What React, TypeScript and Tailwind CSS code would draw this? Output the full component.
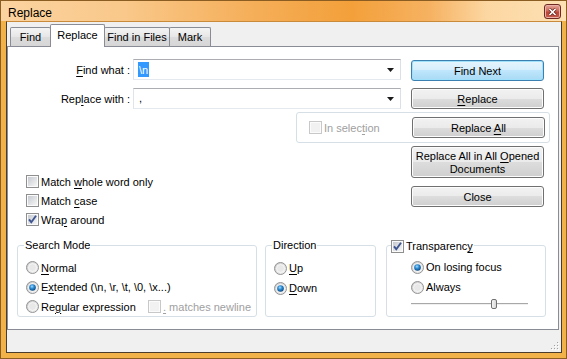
import React from 'react';

const U = ({ children }: { children: React.ReactNode }) => (
  <span className="underline underline-offset-[2px] decoration-[1px]">{children}</span>
);

function Check({ checked = false, disabled = false }: { checked?: boolean; disabled?: boolean }) {
  return (
    <svg width="13" height="13" viewBox="0 0 13 13" className="shrink-0">
      <defs>
        <linearGradient id="cbIn" x1="0" y1="0" x2="1" y2="1">
          <stop offset="0" stopColor="#c6cad0" />
          <stop offset="1" stopColor="#f6f6f6" />
        </linearGradient>
      </defs>
      <rect x="0.5" y="0.5" width="12" height="12" fill="#fbfbfb" stroke={disabled ? '#c8c8c8' : '#8f8f8f'} />
      <rect x="2" y="2" width="9" height="9" fill={disabled ? '#f1f1f1' : 'url(#cbIn)'} />
      {checked && <path d="M3 6.3 L5.3 9.2 L10 2.8" fill="none" stroke="#3e5590" strokeWidth="1.9" />}
    </svg>
  );
}

function Radio({ checked = false }: { checked?: boolean }) {
  return (
    <svg width="13" height="13" viewBox="0 0 13 13" className="shrink-0">
      <defs>
        <linearGradient id="rbOut" x1="0" y1="0" x2="1" y2="1">
          <stop offset="0" stopColor="#c8c8c8" />
          <stop offset="1" stopColor="#f4f4f4" />
        </linearGradient>
        <radialGradient id="rbDot" cx="0.42" cy="0.35" r="0.65">
          <stop offset="0" stopColor="#a6dcfb" />
          <stop offset="0.45" stopColor="#2f8fd6" />
          <stop offset="1" stopColor="#0c4a85" />
        </radialGradient>
      </defs>
      <circle cx="6.5" cy="6.5" r="6" fill="url(#rbOut)" stroke="#949494" />
      <circle cx="6.5" cy="6.5" r="4" fill="#e8e8e8" stroke="#fafafa" strokeWidth="0.8" />
      {checked && <circle cx="6.5" cy="6.5" r="3.3" fill="url(#rbDot)" />}
    </svg>
  );
}

function Btn({ children, primary = false, className = '' }: { children: React.ReactNode; primary?: boolean; className?: string }) {
  const skin = primary
    ? 'border-[#3c7fb1] bg-[linear-gradient(#e5f5fd,#d5eefc_50%,#bfe6fc_50%,#a9daf5)] shadow-[inset_0_0_0_1px_#9fe0fb]'
    : 'border-[#707070] bg-[linear-gradient(#f2f2f2,#ebebeb_50%,#dddddd_50%,#cfcfcf)] shadow-[inset_0_0_0_1px_#fcfcfc]';
  return (
    <div className={`w-[133px] flex items-center justify-center text-center leading-[13px] rounded-[3px] border ${skin} ${className}`}>
      <span className="pt-[2px]">{children}</span>
    </div>
  );
}

function Combo({ children }: { children: React.ReactNode }) {
  return (
    <div className="ml-[3px] w-[268px] h-[21px] flex items-center bg-white border border-[#abadb3] border-b-[#e3e9ef] border-l-[#e2e3ea] border-r-[#dbdfe6] pl-[4px] pr-[6px]">
      {children}
      <svg width="7" height="4" viewBox="0 0 7 4" className="ml-auto">
        <polygon points="0,0 7,0 3.5,4" fill="#1a1a1a" />
      </svg>
    </div>
  );
}

function Group({ title, className = '', children }: { title: React.ReactNode; className?: string; children: React.ReactNode }) {
  return (
    <div className={`relative border border-[#d5dfe5] rounded-[3px] ${className}`}>
      <div className="absolute -top-[7px] left-[6px] bg-white px-[1px] leading-[13px] flex items-center">{title}</div>
      {children}
    </div>
  );
}

function CloseBtn() {
  return (
    <div className="w-[17px] h-[15px] mt-[3px] rounded-[3px] border border-[#6e2a22] bg-[linear-gradient(#e4a49a,#cf6a5c_45%,#bb4638_55%,#c8594a)] flex items-center justify-center shadow-[inset_0_0_0_1px_#eab1a8]">
      <svg width="9" height="8" viewBox="0 0 9 8">
        <path d="M1.5 1 L7.5 7 M7.5 1 L1.5 7" stroke="#5a2018" strokeWidth="3" />
        <path d="M1.5 1 L7.5 7 M7.5 1 L1.5 7" stroke="#ffffff" strokeWidth="1.7" />
      </svg>
    </div>
  );
}

export default function App() {
  return (
    <div className="w-[567px] h-[359px] flex flex-col bg-[#f1b24a] border border-[#8c5d22] font-['Liberation_Sans',Arial,sans-serif] text-[11px] text-black leading-none select-none overflow-hidden">
      {/* Title bar */}
      <div className="h-[20px] shrink-0 flex items-start justify-between pl-[7px] pr-[5px] bg-[linear-gradient(90deg,#fbd3a0_0%,#f9c88a_22%,#f5ae58_45%,#f3a03a_62%,#f6b262_76%,#fcd7a2_86%,#fde0b4_100%)]">
        <span className="text-[12px] mt-[6px]">Replace</span>
        <CloseBtn />
      </div>

      {/* Frame + client */}
      <div className="flex-1 flex pl-[5px] pr-[4px] pb-[5px]">
        <div className="flex-1 flex flex-col bg-[#f0f0f0] border border-[#4a3c2c] border-t-[#c98a3a]">
          {/* Tabs */}
          <div className="h-[24px] shrink-0 flex items-end pl-[3px]">
            <div className="w-[41px] h-[19px] flex items-center justify-center pt-[1px] border border-b-0 border-[#898c95] rounded-t-[2px] bg-[linear-gradient(#f4f4f4,#e6e6e6_50%,#dcdcdc_50%,#d6d6d6)]">Find</div>
            <div className="-ml-[1px] -mb-[1px] relative z-10 w-[55px] h-[23px] flex items-center justify-center pb-[1px] border border-b-0 border-[#898c95] rounded-t-[2px] bg-white">Replace</div>
            <div className="-ml-[1px] w-[66px] h-[19px] flex items-center justify-center pt-[1px] border border-b-0 border-[#898c95] rounded-t-[2px] bg-[linear-gradient(#f4f4f4,#e6e6e6_50%,#dcdcdc_50%,#d6d6d6)]">Find in Files</div>
            <div className="-ml-[1px] w-[42px] h-[19px] flex items-center justify-center pt-[1px] border border-b-0 border-[#898c95] rounded-t-[2px] bg-[linear-gradient(#f4f4f4,#e6e6e6_50%,#dcdcdc_50%,#d6d6d6)]">Mark</div>
          </div>

          {/* Tab panel */}
          <div className="w-[552px] h-[284px] shrink-0 bg-white border border-[#898c95] flex flex-col">
            <div className="flex items-start mt-[12px]">
              <div className="w-[122px] h-[21px] pt-[2px] flex items-center justify-end"><U>F</U>ind what :</div>
              <Combo>
                <span className="bg-[#3399ff] text-white h-[15px] px-[1px] pt-[1px] flex items-center">{'\\n'}</span>
              </Combo>
              <Btn primary className="ml-[10px] mt-[1px] h-[21px]">Find Next</Btn>
            </div>

            <div className="flex items-start mt-[7px]">
              <div className="w-[122px] h-[21px] pt-[2px] flex items-center justify-end">Rep<U>l</U>ace with :</div>
              <Combo>
                <span className="pl-[1px]">,</span>
              </Combo>
              <Btn className="ml-[10px] h-[21px]"><U>R</U>eplace</Btn>
            </div>

            <div className="ml-[288px] mt-[3px] w-[254px] h-[31px] flex items-center pl-[12px] pr-[4px] border border-[#d5dfe5] rounded-[3px]">
              <Check disabled />
              <span className="ml-[2px] pt-[1px] text-[#a0a0a0]">In selec<U>t</U>ion</span>
              <Btn className="ml-auto h-[21px]">Replace <U>A</U>ll</Btn>
            </div>

            <div className="flex items-start">
              <div className="ml-[18px] w-[385px] mt-[29px] flex flex-col">
                <div className="h-[19px] flex items-center gap-[2px]"><Check /><span className="pt-[1px]">Match <U>w</U>hole word only</span></div>
                <div className="h-[19px] flex items-center gap-[2px]"><Check /><span className="pt-[1px]">Match <U>c</U>ase</span></div>
                <div className="h-[19px] flex items-center gap-[2px]"><Check checked /><span className="pt-[1px]">Wra<U>p</U> around</span></div>
              </div>
              <div className="w-[133px] mt-[3px] flex flex-col gap-[8px]">
                <Btn className="h-[32px]">Replace All in All <U>O</U>pened<br />Documents</Btn>
                <Btn className="h-[21px]">Close</Btn>
              </div>
            </div>

            <div className="flex items-start mt-[16px]">
              <Group title="Search Mode" className="ml-[9px] w-[240px] h-[72px] pt-[12px] pl-[8px]">
                <div className="h-[19px] flex items-center gap-[2px]"><Radio /><span className="pt-[1px]"><U>N</U>ormal</span></div>
                <div className="h-[20px] flex items-center gap-[2px]"><Radio checked /><span className="pt-[1px]">E<U>x</U>tended (\n, \r, \t, \0, \x...)</span></div>
                <div className="h-[19px] flex items-center">
                  <div className="w-[122px] flex items-center gap-[2px]"><Radio /><span className="pt-[1px]">Re<U>g</U>ular expression</span></div>
                  <Check disabled />
                  <span className="ml-[2px] pt-[1px] text-[#a0a0a0]"><U>.</U> matches newline</span>
                </div>
              </Group>

              <Group title="Direction" className="ml-[8px] w-[111px] h-[72px] pt-[12px] pl-[8px]">
                <div className="h-[20px] flex items-center gap-[2px]"><Radio /><span className="pt-[1px]"><U>U</U>p</span></div>
                <div className="h-[20px] flex items-center gap-[2px]"><Radio checked /><span className="pt-[1px]"><U>D</U>own</span></div>
              </Group>

              <Group
                title={<span className="flex items-center gap-[2px] -ml-[3px]"><Check checked /><span className="pt-[1px]">Transparenc<U>y</U></span></span>}
                className="ml-[10px] w-[160px] h-[72px] pt-[11px] pl-[24px]"
              >
                <div className="h-[20px] flex items-center gap-[2px]"><Radio checked /><span className="pt-[1px]">On losing focus</span></div>
                <div className="h-[20px] flex items-center gap-[2px]"><Radio /><span className="pt-[1px]">Always</span></div>
                <div className="relative w-[117px] h-[14px] flex items-center">
                  <div className="w-full h-[2px] border-t border-[#a8a8a8] border-b border-b-[#f0f0f0]" />
                  <div className="absolute left-[80px] top-[2px] w-[6px] h-[10px] rounded-[2px] border border-[#707070] bg-[linear-gradient(90deg,#f4f4f4,#d8d8d8)]" />
                </div>
              </Group>
            </div>
          </div>

          {/* Status / grip area */}
          <div className="flex-1 flex items-end justify-end pr-[2px] pb-[2px]">
            <svg width="10" height="10" viewBox="0 0 10 10">
              {[[8, 8], [5, 8], [2, 8], [8, 5], [5, 5], [8, 2]].map(([x, y]) => (
                <g key={`${x}-${y}`}>
                  <rect x={x} y={y} width="1" height="1" fill="#a0a0a0" />
                  <rect x={x + 1} y={y + 1} width="1" height="1" fill="#ffffff" />
                </g>
              ))}
            </svg>
          </div>
        </div>
      </div>
    </div>
  );
}
